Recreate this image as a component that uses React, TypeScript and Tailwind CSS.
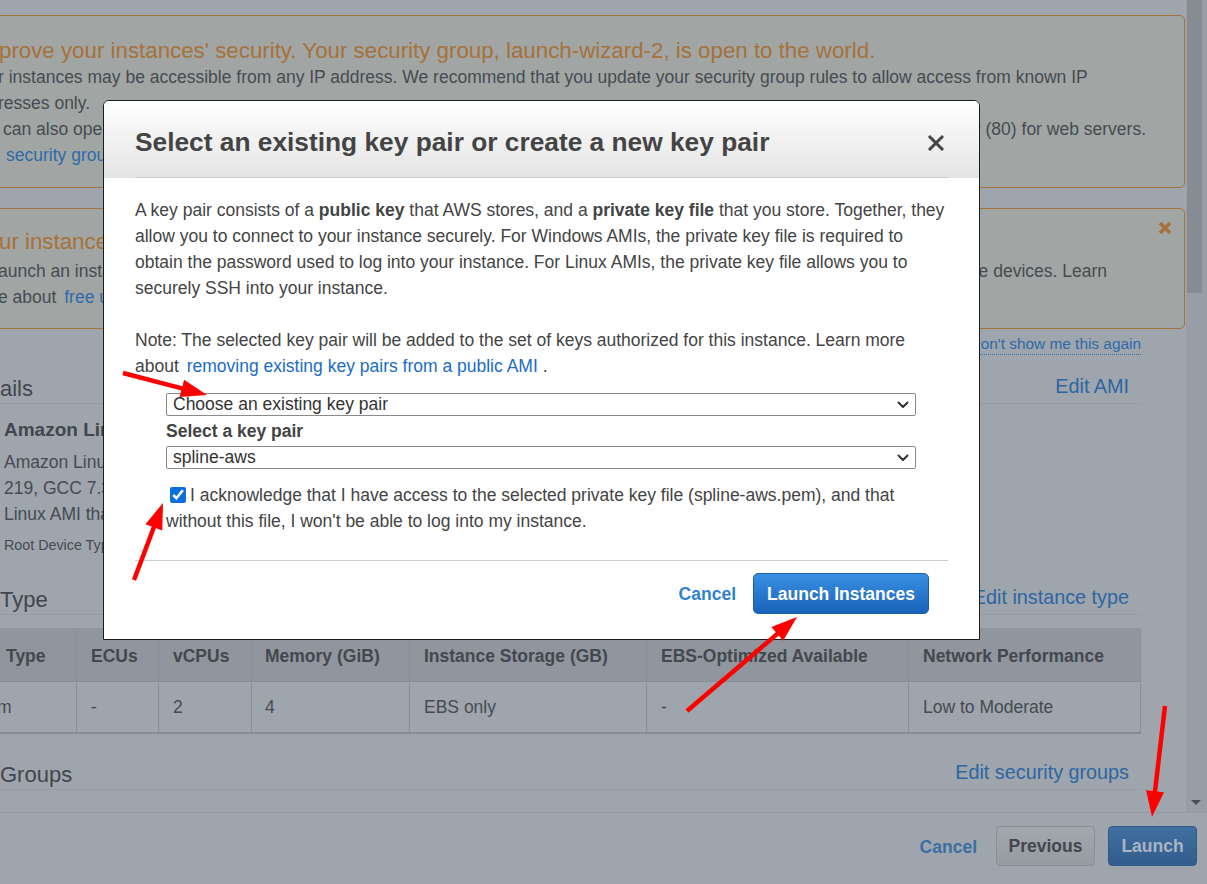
import React from "react";

type ArrowProps = { x1: number; y1: number; x2: number; y2: number };

function Arrow({ x1, y1, x2, y2 }: ArrowProps) {
  const dx = x2 - x1;
  const dy = y2 - y1;
  const len = Math.hypot(dx, dy);
  const ux = dx / len;
  const uy = dy / len;
  const head = 26;
  const half = 9;
  const bx = x2 - ux * head;
  const by = y2 - uy * head;
  const pts = `${x2},${y2} ${bx - uy * half},${by + ux * half} ${bx + uy * half},${by - ux * half}`;
  return (
    <g>
      <line x1={x1} y1={y1} x2={bx + ux * 3} y2={by + uy * 3} stroke="#ff0000" strokeWidth={4.5} />
      <polygon points={pts} fill="#ff0000" />
    </g>
  );
}

function Chevron() {
  return (
    <svg width="12" height="8" viewBox="0 0 12 8" fill="none">
      <path d="M1.5 1.5L6 6l4.5-4.5" stroke="#333" strokeWidth="2" strokeLinecap="round" strokeLinejoin="round" />
    </svg>
  );
}

function SelectBox({ value }: { value: string }) {
  return (
    <div className="flex h-[23px] w-[750px] items-center justify-between rounded-[2px] border border-[#8a8a8a] bg-white pl-[6px] pr-[6px] text-[#333]">
      <span className="leading-none">{value}</span>
      <Chevron />
    </div>
  );
}

function Modal() {
  return (
    <div className="absolute left-[103px] top-[100px] flex h-[540px] w-[877px] flex-col overflow-hidden rounded-t-[6px] border border-[#1c1c1c] bg-white text-[#444]">
      <div className="flex flex-col bg-gradient-to-b from-white to-[#e4e4e4]">
        <div className="flex h-[76px] items-center justify-between px-[31px] pt-[6px]">
          <h2 className="text-[26.3px] font-bold leading-none text-[#444]">
            Select an existing key pair or create a new key pair
          </h2>
          <svg width="18" height="18" viewBox="0 0 18 18" className="mr-[3px] mt-[2px]">
            <path d="M2 2l14 14M16 2L2 16" stroke="#444" strokeWidth="3" />
          </svg>
        </div>
        <div className="mx-[31px] h-px bg-[#cdcdcd]" />
      </div>

      <div className="flex flex-col px-[31px] pt-[19px] text-[17.5px] leading-[26px]">
        <p className="whitespace-nowrap">
          A key pair consists of a <b>public key</b> that AWS stores, and a <b>private key file</b> that you store. Together, they
          <br />
          allow you to connect to your instance securely. For Windows AMIs, the private key file is required to
          <br />
          obtain the password used to log into your instance. For Linux AMIs, the private key file allows you to
          <br />
          securely SSH into your instance.
        </p>
        <p className="mt-[26px] whitespace-nowrap">
          Note: The selected key pair will be added to the set of keys authorized for this instance. Learn more
          <br />
          about <span className="ml-[3px] text-[#1a6cc4]">removing existing key pairs from a public AMI</span> .
        </p>

        <div className="mt-[14px] flex flex-col pl-[31px]">
          <SelectBox value="Choose an existing key pair" />
          <div className="flex h-[30px] items-center font-bold">Select a key pair</div>
          <SelectBox value="spline-aws" />
          <p className="mt-[13px] whitespace-nowrap">
            <input
              type="checkbox"
              checked
              readOnly
              className="mb-[3px] ml-[4px] mr-[4px] h-[16px] w-[16px] align-middle accent-[#0b6fe0]"
            />
            I acknowledge that I have access to the selected private key file (spline-aws.pem), and that
            <br />
            without this file, I won't be able to log into my instance.
          </p>
        </div>

        <div className="mt-[26px] h-px bg-[#cdcdcd]" />

        <div className="mt-[12px] flex items-center justify-end gap-[17px] pr-[19px]">
          <span className="font-bold text-[#2f80d1]">Cancel</span>
          <button className="flex h-[41px] w-[176px] items-center justify-center rounded-[5px] border border-[#1a5ea9] bg-gradient-to-b from-[#3890e2] to-[#1a63ba] font-bold text-white">
            Launch Instances
          </button>
        </div>
      </div>
    </div>
  );
}

const cols = [
  { head: "Type", cell: "m", w: "w-[76px]", pl: "pl-[6px]" },
  { head: "ECUs", cell: "-", w: "w-[82px]", pl: "pl-[14px]" },
  { head: "vCPUs", cell: "2", w: "w-[93px]", pl: "pl-[14px]" },
  { head: "Memory (GiB)", cell: "4", w: "w-[158px]", pl: "pl-[13px]" },
  { head: "Instance Storage (GB)", cell: "EBS only", w: "w-[237px]", pl: "pl-[14px]" },
  { head: "EBS-Optimized Available", cell: "-", w: "w-[262px]", pl: "pl-[14px]" },
  { head: "Network Performance", cell: "Low to Moderate", w: "w-[233px]", pl: "pl-[14px]" },
];

function InstanceTable() {
  return (
    <div className="mt-[13px] flex w-[1141px] flex-col border-b-2 border-[#878d94]">
      <div className="flex h-[53px] bg-[#8f969d] pt-[3px] font-bold text-[#43484e]">
        {cols.map((c, i) => (
          <div
            key={c.head}
            className={`${c.w} ${c.pl} flex shrink-0 items-center whitespace-nowrap ${i > 0 ? "border-l border-[#878e95]" : ""} ${i === cols.length - 1 ? "border-r border-r-[#878e95]" : ""}`}
          >
            {c.head}
          </div>
        ))}
      </div>
      <div className="flex h-[51px] border-t border-[#878e95] pt-[1px]">
        {cols.map((c, i) => (
          <div
            key={c.head}
            className={`${c.w} ${i === 0 ? "pl-0" : c.pl} flex shrink-0 items-center whitespace-nowrap ${i > 0 ? "border-l border-[#878e95]" : ""} ${i === cols.length - 1 ? "border-r border-r-[#878e95]" : ""}`}
          >
            <span className={i === 0 ? "-ml-[3px]" : ""}>{c.cell}</span>
          </div>
        ))}
      </div>
    </div>
  );
}

function SectionHead({ title, link, mt }: { title: string; link: string; mt: string }) {
  return (
    <div className={`${mt} flex h-[29px] w-[1141px] items-start justify-between border-b border-[#959ca3] pr-[12px]`}>
      <span className="text-[22px] leading-[28px] text-[#41464c]">{title}</span>
      <span className="text-[19.8px] leading-[22px] text-[#2d66a1]">{link}</span>
    </div>
  );
}

function Page() {
  return (
    <main className="flex w-[1186px] flex-col overflow-hidden pt-[15px]">
      <div className="-ml-[20px] mr-[1px] flex flex-col rounded-r-[5px] border border-[#a3733b] bg-[#a1a6a4] pb-[19px] pl-[18px] pt-[20px] whitespace-nowrap">
        <div className="mt-[1px] -mb-[1px] text-[22.3px] leading-[28px] text-[#a7713a]">
          prove your instances' security. Your security group, launch-wizard-2, is open to the world.
        </div>
        <div className="leading-[26px]">
          <div className="-ml-[1px]">
            r instances may be accessible from any IP address. We recommend that you update your security group rules to allow access from known IP
          </div>
          <div className="-ml-[1px]">resses only.</div>
          <div className="ml-[4px] flex w-[1143px] justify-between">
            <span>can also open additional ports in your security group</span>
            <span>HTTP (80) for web servers.</span>
          </div>
          <div className="ml-[7px] text-[#2f69a8]">security groups</div>
        </div>
      </div>

      <div className="relative -ml-[20px] mr-[1px] mt-[20px] flex flex-col rounded-r-[5px] border border-[#a3733b] bg-[#a1a6a4] pb-[18px] pl-[18px] pt-[19px] whitespace-nowrap">
        <svg width="14" height="14" viewBox="0 0 14 14" className="absolute right-[12px] top-[12px]">
          <path d="M2 2l10 10M12 2L2 12" stroke="#a5703a" strokeWidth="3.5" />
        </svg>
        <div className="text-[22.3px] leading-[28px] text-[#a7713a]">ur instances are not eligible for the free usage tier</div>
        <div className="mt-[2px] leading-[26px]">
          <div className="-ml-[1px] flex w-[1109px] justify-between">
            <span>aunch an instance</span>
            <span>mobile devices. Learn</span>
          </div>
          <div className="-ml-[1px]">
            e about <span className="ml-[3px] text-[#2f69a8]">free usage tier</span>
          </div>
        </div>
      </div>

      <div className="mt-[5px] flex w-[1141px] justify-end">
        <span className="border-b border-dotted border-[#2f69a8] text-[15.4px] leading-[20px] text-[#2f69a8]">
          Don't show me this again
        </span>
      </div>

      <SectionHead title="ails" link="Edit AMI" mt="mt-[20px]" />

      <div className="flex flex-col whitespace-nowrap pl-[4px]">
        <div className="mt-[13px] text-[19px] font-bold leading-[26px] text-[#41464c]">Amazon Linux 2 AMI (HVM)</div>
        <div className="mt-[6px] leading-[26px]">
          <div>Amazon Linux 2 comes with five years support</div>
          <div>219, GCC 7.3.1, Glibc 2.26</div>
          <div>Linux AMI that is optimized</div>
        </div>
        <div className="mt-[8px] text-[14.3px] leading-[20px]">Root Device Type: ebs</div>
      </div>

      <SectionHead title="Type" link="Edit instance type" mt="mt-[31px]" />

      <InstanceTable />

      <SectionHead title="Groups" link="Edit security groups" mt="mt-[27px]" />
    </main>
  );
}

export default function App() {
  return (
    <div className="relative h-[884px] w-[1207px] overflow-hidden bg-[#9ea5ac] font-['Liberation_Sans',Arial,sans-serif] text-[17.5px] text-[#464b51]">
      <div className="flex h-[812px]">
        <Page />
        <div className="flex w-[21px] flex-col items-start bg-[#979ea5]">
          <div className="ml-[1px] h-[293px] w-[15px] bg-[#868c92]" />
          <div className="mt-auto mb-[7px] ml-[5px] h-0 w-0 border-x-[5px] border-t-[5px] border-x-transparent border-t-[#4a4f55]" />
        </div>
      </div>

      <footer className="flex h-[72px] items-start justify-end border-t border-[#959ca3] pr-[10px] pt-[13px]">
        <span className="mr-[19px] mt-[8px] text-[17.5px] font-bold text-[#3a6ea6]">Cancel</span>
        <button className="h-[40px] w-[99px] rounded-[4px] border border-[#898f95] bg-gradient-to-b from-[#a2a8ae] to-[#959ba1] font-bold text-[#42474d]">
          Previous
        </button>
        <button className="ml-[13px] h-[40px] w-[89px] rounded-[4px] border border-[#2e5a88] bg-gradient-to-b from-[#416f9f] to-[#325d8c] font-bold text-[#a9b5c1]">
          Launch
        </button>
      </footer>

      <Modal />

      <svg className="pointer-events-none absolute left-0 top-0" width="1207" height="884">
        <Arrow x1={123} y1={373} x2={207} y2={395} />
        <Arrow x1={134} y1={580} x2={163} y2={503} />
        <Arrow x1={687} y1={711} x2={797} y2={617} />
        <Arrow x1={1165} y1={706} x2={1152} y2={817} />
      </svg>
    </div>
  );
}
